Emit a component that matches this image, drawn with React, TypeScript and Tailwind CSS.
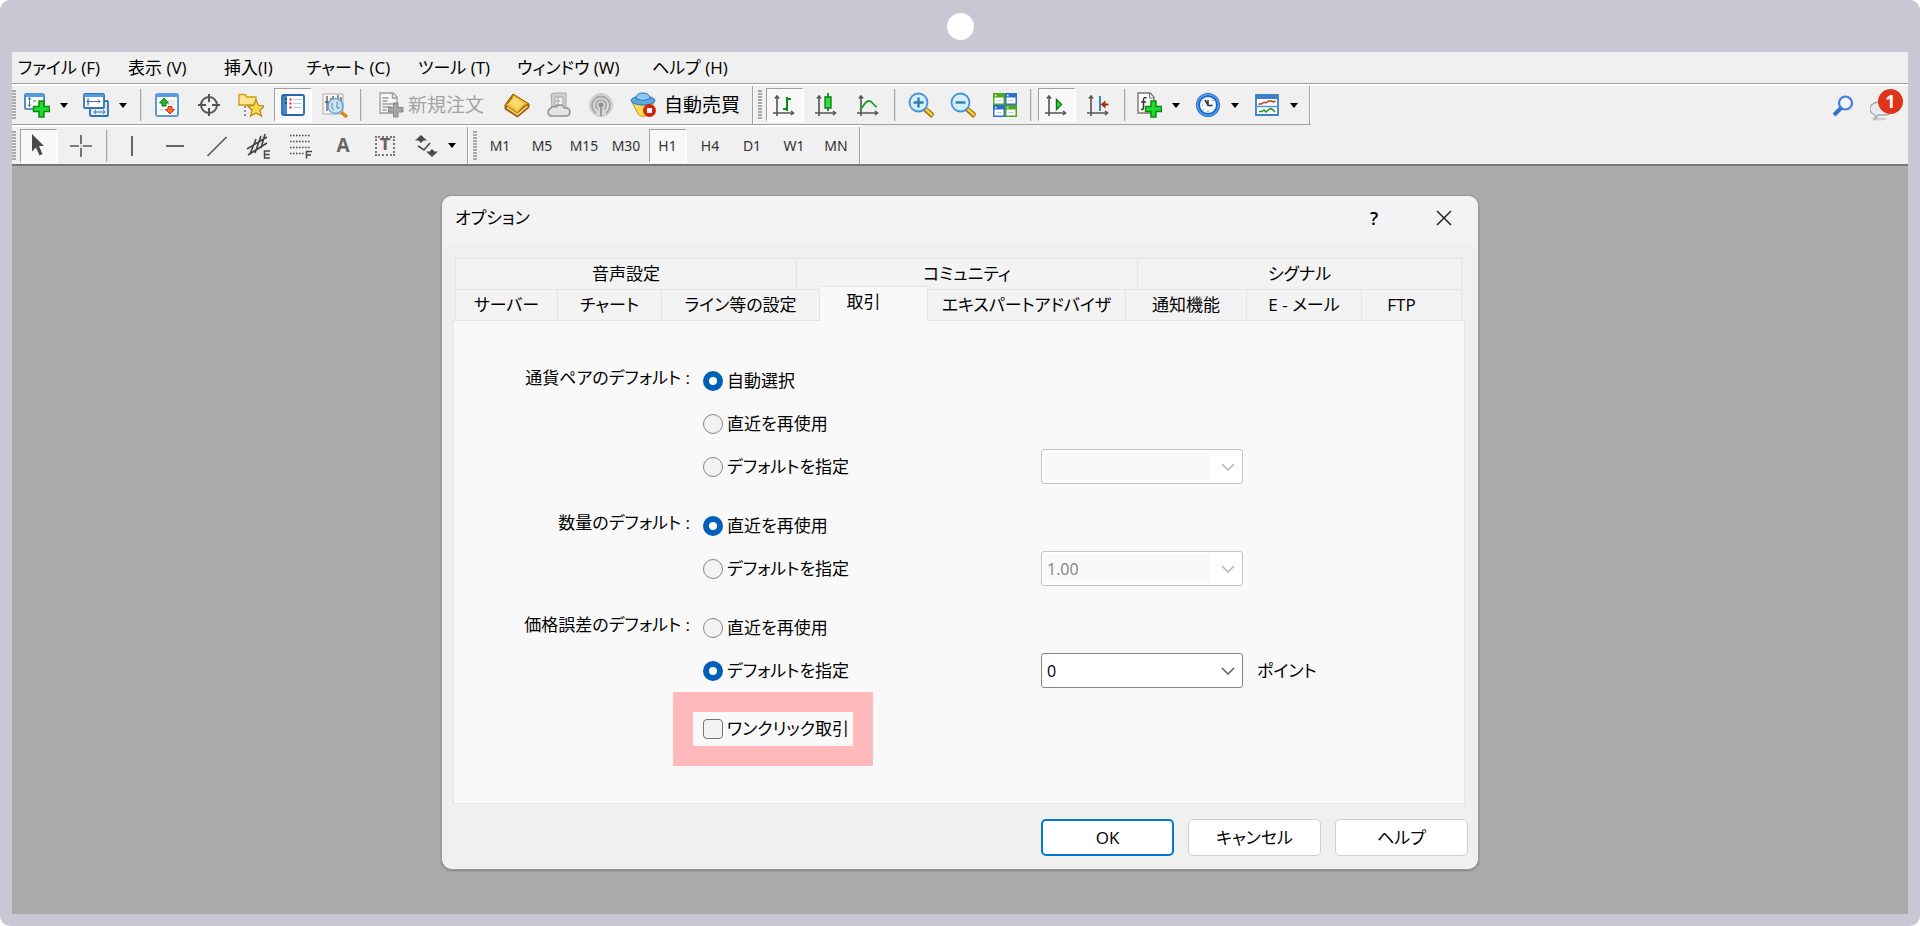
import React from 'react';
import clsx from 'clsx';

type IconProps = { children: React.ReactNode };

const Icon = ({ children }: IconProps) => (
  <svg viewBox="0 0 26 26" className="w-[26px] h-[26px] shrink-0" fill="none" aria-hidden="true">
    {children}
  </svg>
);

const Axes = () => (
  <g stroke="#555" strokeWidth="1.6">
    <path d="M5 4v20M1 21h20" />
    <path d="M3 6.500l2-2.500 2 2.500M19 19l2.500 2-2.500 2" />
  </g>
);

const GreenPlus = () => (
  <path d="M15 9h5v5.500h5.500v5h-5.500v5.500h-5v-5.500h-5.500v-5h5.500z" fill="#1fdc2b" stroke="#0b8a14" strokeWidth="1.500" />
);

const NewChartIcon = () => (
  <Icon>
    <rect x="1" y="2" width="19" height="15" rx="1" fill="#fff" stroke="#2f74b5" strokeWidth="1.6" />
    <path d="M1 3.500h19" stroke="#4e9be0" strokeWidth="3" />
    <path d="M5.500 6v8M4 7.500l1.500-2 1.500 2M4 12.500l1.500 2 1.500-2M9 9h3" stroke="#46709c" />
    <GreenPlus />
  </Icon>
);

const ProfilesIcon = () => (
  <Icon>
    <rect x="7" y="9" width="18" height="15" rx="1" fill="#dcecfb" stroke="#2f74b5" strokeWidth="1.800" />
    <path d="M11 20h11M13 18l-2 2 2 2M20 18l2 2-2 2" stroke="#46709c" />
    <rect x="1" y="2" width="20" height="14" rx="1" fill="#fff" stroke="#2f74b5" strokeWidth="1.800" />
    <path d="M1 3.500h20" stroke="#4e9be0" strokeWidth="3" />
    <path d="M5 6v8M4 9.500h13M15 7.500l2 2-2 2M6 7.500l-2 2 2 2" stroke="#46709c" />
  </Icon>
);

const MarketWatchIcon = () => (
  <Icon>
    <rect x="2" y="2" width="22" height="22" rx="2" fill="#fff" stroke="#5a9bdc" strokeWidth="2" />
    <path d="M2 3.500h22" stroke="#5a9bdc" strokeWidth="3" />
    <path d="M14 9h7M5 18h7M14 12h7" stroke="#ccc" />
    <path d="M10 6l4.500 5h-2.500v3h-4v-3h-2.500z" fill="#27b62f" stroke="#0f7f17" />
    <path d="M16 22l4.500-4.500h-2.500v-3h-4v3h-2.500z" fill="#ff6a3c" stroke="#d23208" />
  </Icon>
);

const TargetIcon = () => (
  <Icon>
    <circle cx="13" cy="13" r="8" stroke="#555" strokeWidth="2" />
    <path d="M13 2v8M13 16v8M2 13h8M16 13h8" stroke="#555" strokeWidth="2" />
  </Icon>
);

const FavoritesIcon = () => (
  <Icon>
    <path d="M1 2.500h6l2 2.500h9v8h-17z" fill="#fbe58c" stroke="#c99a1c" strokeWidth="1.300" />
    <path d="M7 14v11" stroke="#333" strokeDasharray="2 2" />
    <path d="M18 8l2.500 5.500 6 .500-4.500 4 1.500 6-5.500-3-5.500 3 1.500-6-4.500-4 6-.5z" fill="#fbd84a" stroke="#b8831a" strokeWidth="1.200" />
  </Icon>
);

const NavigatorIcon = () => (
  <Icon>
    <rect x="2" y="3" width="22" height="20" rx="1.500" fill="#fff" stroke="#2368b0" strokeWidth="1.800" />
    <path d="M3 4h4v18h-4z" fill="#3f86cf" />
    <path d="M13 7.500h9M13 11.500h9M13 15.500h9" stroke="#bbc9ee" />
    <path d="M9.500 6.500h2v2h-2z" fill="#e22" />
    <path d="M9.500 10.500h2v2h-2zM9.500 14.500h2v2h-2z" fill="#e22" />
    <path d="M5 7h1.500M5 11h1.500" stroke="#000" />
  </Icon>
);

const TesterIcon = () => (
  <Icon>
    <path d="M1 2h20v20h-20z" fill="#faf6f0" stroke="#b5aba0" />
    <path d="M5 4v15M8 7h3v-3M16 3v8M19 5v9M3 10h4" stroke="#555" strokeWidth="1.300" />
    <path d="M19 20l6 5" stroke="#cf8a14" strokeWidth="3.500" />
    <circle cx="13.500" cy="14" r="7.500" fill="#bfe0f8" fillOpacity=".85" stroke="#6aa6dc" strokeWidth="1.500" />
    <path d="M10 11v5l2 2M15 10v6h3" stroke="#57809f" />
  </Icon>
);

const NewOrderIcon = () => (
  <Icon>
    <path d="M2 1h13l4 4v16h-17z" fill="#f6f6f6" stroke="#9b9b9b" strokeWidth="1.300" />
    <path d="M14.500 1v5h4.500M4.500 6h6M4.500 9h5M4.500 12h11M4.500 15h9M4.500 18h4" stroke="#9b9b9b" strokeWidth="1.400" />
    <path d="M15.500 11h4.500v4.500h5v4.500h-5v5h-4.500v-5h-5v-4.500h5z" fill="#a5a5a5" stroke="#858585" />
  </Icon>
);

const BookIcon = () => (
  <Icon>
    <path d="M9 2l16 10v3.500l-11.500 9.500-12.500-8v-4z" fill="#b06a08" stroke="#8d5408" />
    <path d="M9.500 2.500l14.500 9q-6 3-10.500 9.500l-12-8q5.500-4 8-10.500z" fill="#f1c234" stroke="#a86c0c" />
    <path d="M10 5l10 6.500q-4 2.500-6.500 6l-8-5.500z" fill="#fbe48a" fillOpacity=".7" />
    <path d="M3 15.500l10.500 7 10-8.500" stroke="#f8dc8a" strokeWidth="1.500" />
  </Icon>
);

const ServerIcon = () => (
  <Icon>
    <path d="M5 2l4-1h11v15h-14z" fill="#cfcfcf" stroke="#a6a6a6" />
    <path d="M9 5h8v8h-8zM12 5v8M9 9h5" fill="#efefef" stroke="#a6a6a6" />
    <path d="M5 24a4 4 0 0 1-.500-7.500a4 4 0 0 1 5.500-1.500a5 5 0 0 1 8.500 1a4 4 0 0 1 2.500 8z" fill="#e4e4e4" stroke="#929292" strokeWidth="1.500" />
  </Icon>
);

const SignalIcon = () => (
  <Icon>
    <circle cx="13" cy="13" r="11.500" fill="#d8d8d8" stroke="#c6c6c6" />
    <path d="M8 21a9 9 0 1 1 10 0M10 17.500a5.200 5.200 0 1 1 6 0" stroke="#a8a8a8" strokeWidth="1.800" />
    <circle cx="13" cy="13" r="2.500" fill="#8f8f8f" />
    <path d="M13 14v10" stroke="#9c9c9c" strokeWidth="2" />
  </Icon>
);

const AutoTradeIcon = () => (
  <Icon>
    <path d="M2 10q11 6 22 0l-5 12q-6 5-11 0z" fill="#fbdc54" stroke="#c99516" />
    <ellipse cx="13" cy="8.500" rx="12" ry="4.500" fill="#5ea9e4" stroke="#2f78b9" />
    <path d="M6 7q0-6 7-6t7 6q-7 3-14 0z" fill="#8cc6f2" stroke="#2f78b9" />
    <circle cx="19.500" cy="18.500" r="6.500" fill="#d7220f" />
    <path d="M17 16h5v5h-5z" fill="#fff" />
  </Icon>
);

const BarChartIcon = () => (
  <Icon>
    <Axes />
    <path d="M15 5v14M15 7h4M11 17h4" stroke="#0c8b17" strokeWidth="2" />
  </Icon>
);

const CandleIcon = () => (
  <Icon>
    <Axes />
    <path d="M14 1v18" stroke="#0a6a12" strokeWidth="1.600" />
    <path d="M11 5h6v11h-6z" fill="#2fe03a" stroke="#0a7a13" strokeWidth="1.300" />
  </Icon>
);

const LineChartIcon = () => (
  <Icon>
    <Axes />
    <path d="M4 18c4-4 5-9 9-9s4 5 8 6" stroke="#259c2d" strokeWidth="1.800" />
  </Icon>
);

const ZoomIcon = ({ plus }: { plus?: boolean }) => (
  <Icon>
    <path d="M17 17l8 7" stroke="#9c6b0b" strokeWidth="5" />
    <path d="M17.500 17l7 6.500" stroke="#f7cd45" strokeWidth="2.500" />
    <circle cx="10.500" cy="10.500" r="9" fill="#d3eefd" stroke="#4592d4" strokeWidth="1.800" />
    <path d={plus ? 'M5.500 10.500h10M10.500 5.500v10' : 'M5.500 10.500h10'} stroke="#2f7fae" strokeWidth="2.400" />
  </Icon>
);

const TileIcon = () => (
  <Icon>
    <path d="M1 1h12v12h-12zM13 13h12v12h-12z" fill="#4ea81c" />
    <path d="M13 1h12v12h-12zM1 13h12v12h-12z" fill="#2f6fd0" />
    <path d="M2.500 5.500h9v6h-9zM14.500 5.500h9v6h-9zM2.500 17.500h9v6h-9zM14.500 17.500h9v6h-9z" fill="#fff" />
    <path d="M4.500 8.500h5M16.500 8.500h5M4.500 20.500h5M16.500 20.500h5" stroke="#b5cfe9" />
    <path d="M3 3.500h1.500M15 3.500h1.500M3 15.500h1.500M15 15.500h1.500" stroke="#fff" strokeWidth="1.500" />
  </Icon>
);

const AutoScrollIcon = () => (
  <Icon>
    <Axes />
    <path d="M12.500 7.500v10l5-5z" fill="#2fe03a" stroke="#0a7a13" strokeWidth="1.400" />
  </Icon>
);

const ShiftIcon = () => (
  <Icon>
    <Axes />
    <path d="M14 4v15" stroke="#2a79b6" strokeWidth="1.800" />
    <path d="M14.500 12.500l5-4v3h3v2h-3v3z" fill="#a83208" />
  </Icon>
);

const IndicatorsIcon = () => (
  <Icon>
    <path d="M2 1h12l4 4v16h-16z" fill="#fff" stroke="#777" strokeWidth="1.400" />
    <path d="M13.500 1v5h4.500" stroke="#777" />
    <path d="M10.500 6q-3-1.500-3 2v7q0 3-2.500 2.500M5 10h5" stroke="#333" strokeWidth="1.500" />
    <GreenPlus />
  </Icon>
);

const ClockIcon = () => (
  <Icon>
    <circle cx="13" cy="13" r="12" fill="#1c66c4" />
    <circle cx="13" cy="13" r="10.500" stroke="#4fa0ee" strokeWidth="1.500" />
    <circle cx="13" cy="13" r="8" fill="#f1f6fb" />
    <path d="M13 8v5.500h4.500M10 8l3 5" stroke="#333" strokeWidth="1.500" />
    <path d="M13 18.500v1.500M7 13h1M18.500 8l-1 1M8 18l1-1" stroke="#789" />
  </Icon>
);

const TemplatesIcon = () => (
  <Icon>
    <path d="M2 3h22v20h-22z" fill="#fff" stroke="#3c82c6" strokeWidth="1.800" />
    <path d="M2 14.500h22" stroke="#4b92d8" strokeWidth="1.500" />
    <path d="M2 3h22v4h-22z" fill="#3c82c6" />
    <path d="M4.500 12h3l2-1.500h3l2-1.500h3l2 1 2-1" stroke="#a6400f" strokeWidth="1.400" />
    <path d="M5 19.500h3l2-1.500 2 2 4-3.500 2 .5 3 3" stroke="#1d8d24" strokeWidth="1.500" />
  </Icon>
);

const CursorIcon = () => (
  <Icon>
    <path d="M6 2l12 12h-5l3.500 8-3 1.500-3.500-8-4 4z" fill="#4a4a4a" />
  </Icon>
);

const CrosshairIcon = () => (
  <Icon>
    <path d="M13 2v9M13 15v9M2 13h9M15 13h9" stroke="#555" strokeWidth="1.600" />
    <path d="M12.500 12.500h1v1h-1z" fill="#555" />
  </Icon>
);

const VLineIcon = () => (
  <Icon>
    <path d="M12 3v20" stroke="#555" strokeWidth="1.800" />
  </Icon>
);

const HLineIcon = () => (
  <Icon>
    <path d="M4 13h18" stroke="#555" strokeWidth="1.800" />
  </Icon>
);

const TrendIcon = () => (
  <Icon>
    <path d="M3.500 23l19-19" stroke="#555" strokeWidth="1.600" />
  </Icon>
);

const ChannelIcon = () => (
  <Icon>
    <path d="M1 16l20-12M2 22l19-12M4 21l6-15M9 20l6-17M15 15l4-14" stroke="#444" strokeWidth="1.600" />
    <path d="M24 18h-5.500v7h5.500M18.500 21.500h5" stroke="#444" strokeWidth="1.500" />
  </Icon>
);

const FiboIcon = () => (
  <Icon>
    <path d="M2 2.500h21M2 8.500h21M2 14.500h21M2 20.500h14" stroke="#444" strokeWidth="1.500" strokeDasharray="1.500 1.500" />
    <path d="M24 18.500h-5.500v7M18.500 22h4.500" stroke="#444" strokeWidth="1.500" />
  </Icon>
);

const ArrowsIcon = () => (
  <Icon>
    <path d="M9 2l6 5.500h-3.500l-2.500 2.500-2.500-2.500h-3.500z" fill="#4a4a4a" />
    <path d="M20 24l-6-5.500h3.500l2.500-2.500 2.500 2.500h3.500z" fill="#4a4a4a" />
    <path d="M6 13l6 4 6-7" stroke="#4a4a4a" strokeWidth="1.600" />
  </Icon>
);

const Caret = () => (
  <svg viewBox="0 0 8 5" className="w-2 h-[5px] shrink-0" aria-hidden="true">
    <path d="M0 0h8l-4 5z" fill="#000" />
  </svg>
);

type ToolProps = { label: string; pressed?: boolean; children: React.ReactNode };

const Tool = ({ label, pressed, children }: ToolProps) => (
  <button
    type="button"
    aria-label={label}
    aria-pressed={pressed}
    className={clsx(
      'w-[38px] h-[34px] shrink-0 flex items-center justify-center',
      pressed && 'bg-[#f8f8f8] border-t border-l border-t-[#a0a0a0] border-l-[#a0a0a0] border-b-2 border-r-2 border-b-white border-r-white'
    )}
  >
    {children}
  </button>
);

const MenuTool = ({ label, children }: ToolProps) => (
  <button type="button" aria-label={label} className="w-[55px] h-[34px] shrink-0 pl-1 flex items-center gap-[10px]">
    {children}
    <Caret />
  </button>
);

const Separator = () => <div className="w-[2px] h-8 mx-[2px] shrink-0 bg-[#a8a8a8] border-r border-[#dedede]" />;

const BandEnd = () => <div className="w-[2px] self-stretch shrink-0 bg-[#a0a0a0] border-r border-white" />;

const Grip = () => (
  <div className="w-1 h-[30px] shrink-0 bg-[repeating-linear-gradient(to_bottom,#a8a8a8_0,#a8a8a8_2px,#f0f0f0_2px,#f0f0f0_3px)]" />
);

const menus = [
  { label: 'ファイル (F)', width: 'w-[110px]' },
  { label: '表示 (V)', width: 'w-[96px]' },
  { label: '挿入(I)', width: 'w-[82px]' },
  { label: 'チャート (C)', width: 'w-[112px]' },
  { label: 'ツール (T)', width: 'w-[99px]' },
  { label: 'ウィンドウ (W)', width: 'w-[135px]' },
  { label: 'ヘルプ (H)', width: 'w-[90px]' },
];

const periods = ['M1', 'M5', 'M15', 'M30', 'H1', 'H4', 'D1', 'W1', 'MN'];

const MenuBar = () => (
  <nav className="h-8 pl-[6px] flex items-center border-b border-[#a0a0a0] text-[17px] leading-6">
    {menus.map((menu) => (
      <button key={menu.label} type="button" className={clsx('shrink-0 text-left whitespace-nowrap', menu.width)}>
        {menu.label}
      </button>
    ))}
  </nav>
);

const MainToolbar = () => (
  <div className="h-[41px] border-t-2 border-white flex items-center">
    <div className="h-full flex items-center gap-1 border-b border-[#a0a0a0]">
      <Grip />
      <MenuTool label="新規チャート"><NewChartIcon /></MenuTool>
      <MenuTool label="チャートの組表示"><ProfilesIcon /></MenuTool>
      <Separator />
      <Tool label="気配値表示"><MarketWatchIcon /></Tool>
      <Tool label="データウィンドウ"><TargetIcon /></Tool>
      <Tool label="お気に入り"><FavoritesIcon /></Tool>
      <Tool label="ナビゲーター" pressed><NavigatorIcon /></Tool>
      <Tool label="ストラテジーテスター"><TesterIcon /></Tool>
      <Separator />
      <button type="button" disabled className="w-[126px] h-[34px] pl-[10px] shrink-0 flex items-center gap-1 text-[19px] text-[#a3a3a3] whitespace-nowrap">
        <NewOrderIcon />
        新規注文
      </button>
      <Tool label="メタエディター"><BookIcon /></Tool>
      <Tool label="仮想サーバー"><ServerIcon /></Tool>
      <Tool label="シグナル"><SignalIcon /></Tool>
      <button type="button" className="w-[124px] h-[34px] pl-[6px] shrink-0 flex items-center gap-2 text-[19px] whitespace-nowrap">
        <AutoTradeIcon />
        自動売買
      </button>
      <BandEnd />
      <Grip />
      <Tool label="バーチャート" pressed><BarChartIcon /></Tool>
      <Tool label="ローソク足"><CandleIcon /></Tool>
      <Tool label="ラインチャート"><LineChartIcon /></Tool>
      <Separator />
      <Tool label="拡大"><ZoomIcon plus /></Tool>
      <Tool label="縮小"><ZoomIcon /></Tool>
      <Tool label="整列"><TileIcon /></Tool>
      <Separator />
      <Tool label="自動スクロール" pressed><AutoScrollIcon /></Tool>
      <Tool label="チャートシフト"><ShiftIcon /></Tool>
      <Separator />
      <MenuTool label="インディケータ"><IndicatorsIcon /></MenuTool>
      <MenuTool label="時間足設定"><ClockIcon /></MenuTool>
      <MenuTool label="定型チャート"><TemplatesIcon /></MenuTool>
      <BandEnd />
    </div>
    <div className="ml-auto pr-3 flex items-center gap-4">
      <button type="button" aria-label="検索" className="flex">
        <svg viewBox="0 0 22 22" className="w-[22px] h-[22px]" fill="none" aria-hidden="true">
          <path d="M10 12l-8 8" stroke="#3c6fc9" strokeWidth="4" />
          <circle cx="13.500" cy="8" r="6.500" fill="#f2f7fd" stroke="#3f7fd6" strokeWidth="2.200" />
        </svg>
      </button>
      <button type="button" aria-label="通知" className="relative w-[26px] h-[34px]">
        <svg viewBox="0 0 26 34" className="w-[26px] h-[34px]" fill="none" aria-hidden="true">
          <ellipse cx="9" cy="30" rx="8" ry="1.500" fill="#d0d0d0" />
          <path d="M10 13c-6 0-10 3-10 7s2 5 5 6v4l3-4h8c3 0 5-2 5-6s-4-7-11-7z" fill="#e9eaee" stroke="#a3a6ae" strokeWidth="1.300" />
        </svg>
        <span className="absolute left-2 top-0 w-[25px] h-[25px] rounded-full bg-[#e0331b] text-white text-lg leading-6 font-bold text-center">
          1
        </span>
      </button>
    </div>
  </div>
);

const DrawingToolbar = () => (
  <div className="h-[41px] flex border-b-2 border-[#777]">
    <div className="flex items-center gap-1 border-t-2 border-white">
      <Grip />
      <Tool label="カーソル" pressed><CursorIcon /></Tool>
      <Tool label="クロスヘア"><CrosshairIcon /></Tool>
      <Separator />
      <Tool label="垂直線"><VLineIcon /></Tool>
      <Tool label="水平線"><HLineIcon /></Tool>
      <Tool label="トレンドライン"><TrendIcon /></Tool>
      <Tool label="平行チャネル"><ChannelIcon /></Tool>
      <Tool label="フィボナッチ"><FiboIcon /></Tool>
      <Tool label="テキスト">
        <span className="font-['Open_Sans',sans-serif] font-bold text-[19px] text-[#666]">A</span>
      </Tool>
      <Tool label="テキストラベル">
        <span className="w-5 h-5 border-2 border-dotted border-[#777] flex items-center justify-center font-['DejaVu_Sans',sans-serif] font-bold text-[15px] text-[#666]">
          T
        </span>
      </Tool>
      <MenuTool label="矢印"><ArrowsIcon /></MenuTool>
      <BandEnd />
      <Grip />
      {periods.map((period) => (
        <Tool key={period} label={period} pressed={period === 'H1'}>
          <span className="font-['Noto_Sans',sans-serif] text-[14px] text-[#333]">{period}</span>
        </Tool>
      ))}
      <BandEnd />
    </div>
  </div>
);

const upperTabs = [
  { label: '音声設定', width: 'w-[341px]' },
  { label: 'コミュニティ', width: 'w-[341px]' },
  { label: 'シグナル', width: 'flex-1' },
];

const lowerTabs = [
  { label: 'サーバー', width: 'w-[102px]' },
  { label: 'チャート', width: 'w-[104px]' },
  { label: 'ライン等の設定', width: 'w-[158px]' },
  { label: '取引', width: 'w-[108px] pr-5' },
  { label: 'エキスパートアドバイザ', width: 'w-[198px]' },
  { label: '通知機能', width: 'w-[121px]' },
  { label: 'E - メール', width: 'w-[115px]' },
  { label: 'FTP', width: 'flex-1 pr-5' },
];

const Chevron = ({ color }: { color: string }) => (
  <svg viewBox="0 0 14 8" className="w-[14px] h-2 mr-1 shrink-0" fill="none" stroke={color} strokeWidth="1.500" aria-hidden="true">
    <path d="M1 1l6 6 6-6" />
  </svg>
);

type ComboProps = { label: string; value: string; disabled?: boolean };

const Combo = ({ label, value, disabled }: ComboProps) => (
  <div
    className={clsx(
      'w-[202px] h-[35px] p-[3px] flex items-center gap-[11px] rounded-[3px] border bg-white',
      disabled ? 'border-[#c4c4c4]' : 'border-[#858585]'
    )}
  >
    <select
      aria-label={label}
      disabled={disabled}
      className="appearance-none h-full min-w-0 flex-1 pl-[2px] text-[16px] leading-6 text-black disabled:bg-[#f9f9f9] disabled:text-[#838383] disabled:opacity-100"
    >
      <option>{value}</option>
    </select>
    <Chevron color={disabled ? '#b5b5b5' : '#5c5c5c'} />
  </div>
);

type Group = {
  name: string;
  title: string;
  options: string[];
  selected: number;
  value: string;
  unit?: string;
  disabled?: boolean;
};

const groups: Group[] = [
  { name: 'symbol', title: '通貨ペアのデフォルト :', options: ['自動選択', '直近を再使用', 'デフォルトを指定'], selected: 0, value: '', disabled: true },
  { name: 'volume', title: '数量のデフォルト :', options: ['直近を再使用', 'デフォルトを指定'], selected: 0, value: '1.00', disabled: true },
  { name: 'deviation', title: '価格誤差のデフォルト :', options: ['直近を再使用', 'デフォルトを指定'], selected: 1, value: '0', unit: 'ポイント' },
];

const OptionGroup = ({ group }: { group: Group }) => (
  <div role="radiogroup" aria-labelledby={`${group.name}-title`} className="flex">
    <div id={`${group.name}-title`} className="w-[249px] h-[38px] pr-[13px] shrink-0 flex items-center justify-end whitespace-nowrap">
      {group.title}
    </div>
    <div className="w-[338px] shrink-0">
      {group.options.map((option, index) => (
        <label key={option} className="h-[43px] flex items-center gap-1">
          <input
            type="radio"
            name={group.name}
            defaultChecked={index === group.selected}
            className="appearance-none w-5 h-5 shrink-0 rounded-full border border-[#858585] bg-[#f3f3f3] checked:border-[6px] checked:border-[#005fb8] checked:bg-white"
          />
          {option}
        </label>
      ))}
    </div>
    <div className="flex items-end">
      <div className="h-[43px] flex items-center gap-[14px]">
        <Combo label={group.title} value={group.value} disabled={group.disabled} />
        {group.unit}
      </div>
    </div>
  </div>
);

const OptionsDialog = () => (
  <section
    role="dialog"
    aria-labelledby="dialog-title"
    className="w-full max-w-[1038px] rounded-[11px] border border-[#979797] bg-[#f0f0f0] shadow-[0_1px_2px_rgba(0,0,0,0.25)] overflow-hidden text-[17px] leading-6"
  >
    <header className="h-[46px] pl-[13px] pr-[22px] pb-[2px] flex items-center bg-[#f3f3f3]">
      <h1 id="dialog-title">オプション</h1>
      <button type="button" className="ml-auto w-8 font-semibold text-[18px]">?</button>
      <button type="button" aria-label="閉じる" className="ml-[42px] w-6 flex justify-center">
        <svg viewBox="0 0 16 16" className="w-4 h-4" stroke="#222" strokeWidth="1.500" aria-hidden="true">
          <path d="M1 1l14 14M15 1l-14 14" />
        </svg>
      </button>
    </header>

    <div className="pt-4 pl-[11px] pr-[13px]">
      <div role="tablist" className="pl-[2px] pr-[3px]">
        <div className="h-[31px] flex border-t border-l border-[#e4e4e4] bg-[#f3f3f3]">
          {upperTabs.map((tab) => (
            <button key={tab.label} type="button" role="tab" aria-selected={false} className={clsx('border-r border-[#e4e4e4]', tab.width)}>
              {tab.label}
            </button>
          ))}
        </div>
        <div className="h-[31px] flex items-end border-l border-[#e4e4e4] bg-[#f3f3f3]">
          {lowerTabs.map((tab) => {
            const active = tab.label === '取引';
            return (
              <button
                key={tab.label}
                type="button"
                role="tab"
                aria-selected={active}
                className={clsx(
                  'border-t border-r border-[#e4e4e4] whitespace-nowrap',
                  active ? 'relative z-10 h-[35px] -mb-px pb-1 shrink-0 bg-[#f9f9f9]' : 'h-[31px]',
                  tab.width
                )}
              >
                {tab.label}
              </button>
            );
          })}
        </div>
      </div>

      <form className="pt-[38px] pb-[37px] border border-[#e4e4e4] bg-[#f9f9f9]">
        <div className="flex flex-col gap-4">
          {groups.map((group) => (
            <OptionGroup key={group.name} group={group} />
          ))}
        </div>
        <div className="pl-[219px] flex">
          <label className="w-[200px] h-[74px] pl-[10px] border-[20px] border-[#ffb9ba] flex items-center gap-1 whitespace-nowrap">
            <input
              type="checkbox"
              className="appearance-none w-5 h-5 shrink-0 rounded-[4px] border border-[#757575] bg-[#f3f3f3] checked:bg-[#005fb8]"
            />
            ワンクリック取引
          </label>
        </div>
      </form>
    </div>

    <footer className="pt-[15px] pb-[13px] pr-[10px] flex justify-end gap-[14px]">
      <button type="button" className="w-[133px] h-[37px] rounded-[5px] border-2 border-[#0078d4] bg-white">OK</button>
      <button type="button" className="w-[133px] h-[37px] rounded-[5px] border border-[#cfcfcf] bg-white">キャンセル</button>
      <button type="button" className="w-[133px] h-[37px] rounded-[5px] border border-[#cfcfcf] bg-white">ヘルプ</button>
    </footer>
  </section>
);

const App = () => {
  return (
    <div className="min-h-screen bg-white text-black font-['Open_Sans','Noto_Sans_CJK_JP',sans-serif] [font-feature-settings:'palt']">
      <div className="min-h-screen px-3 pb-3 flex flex-col rounded-[10px] bg-[#c8c7d3]">
        <div className="h-[52px] flex items-center justify-center">
          <div className="w-[27px] h-[27px] rounded-full bg-white" />
        </div>
        <div className="bg-[#f0f0f0]">
          <MenuBar />
          <MainToolbar />
          <DrawingToolbar />
        </div>
        <main className="flex-1 py-[29px] flex justify-center items-start bg-[#ababab]">
          <OptionsDialog />
        </main>
      </div>
    </div>
  );
};

export default App;
